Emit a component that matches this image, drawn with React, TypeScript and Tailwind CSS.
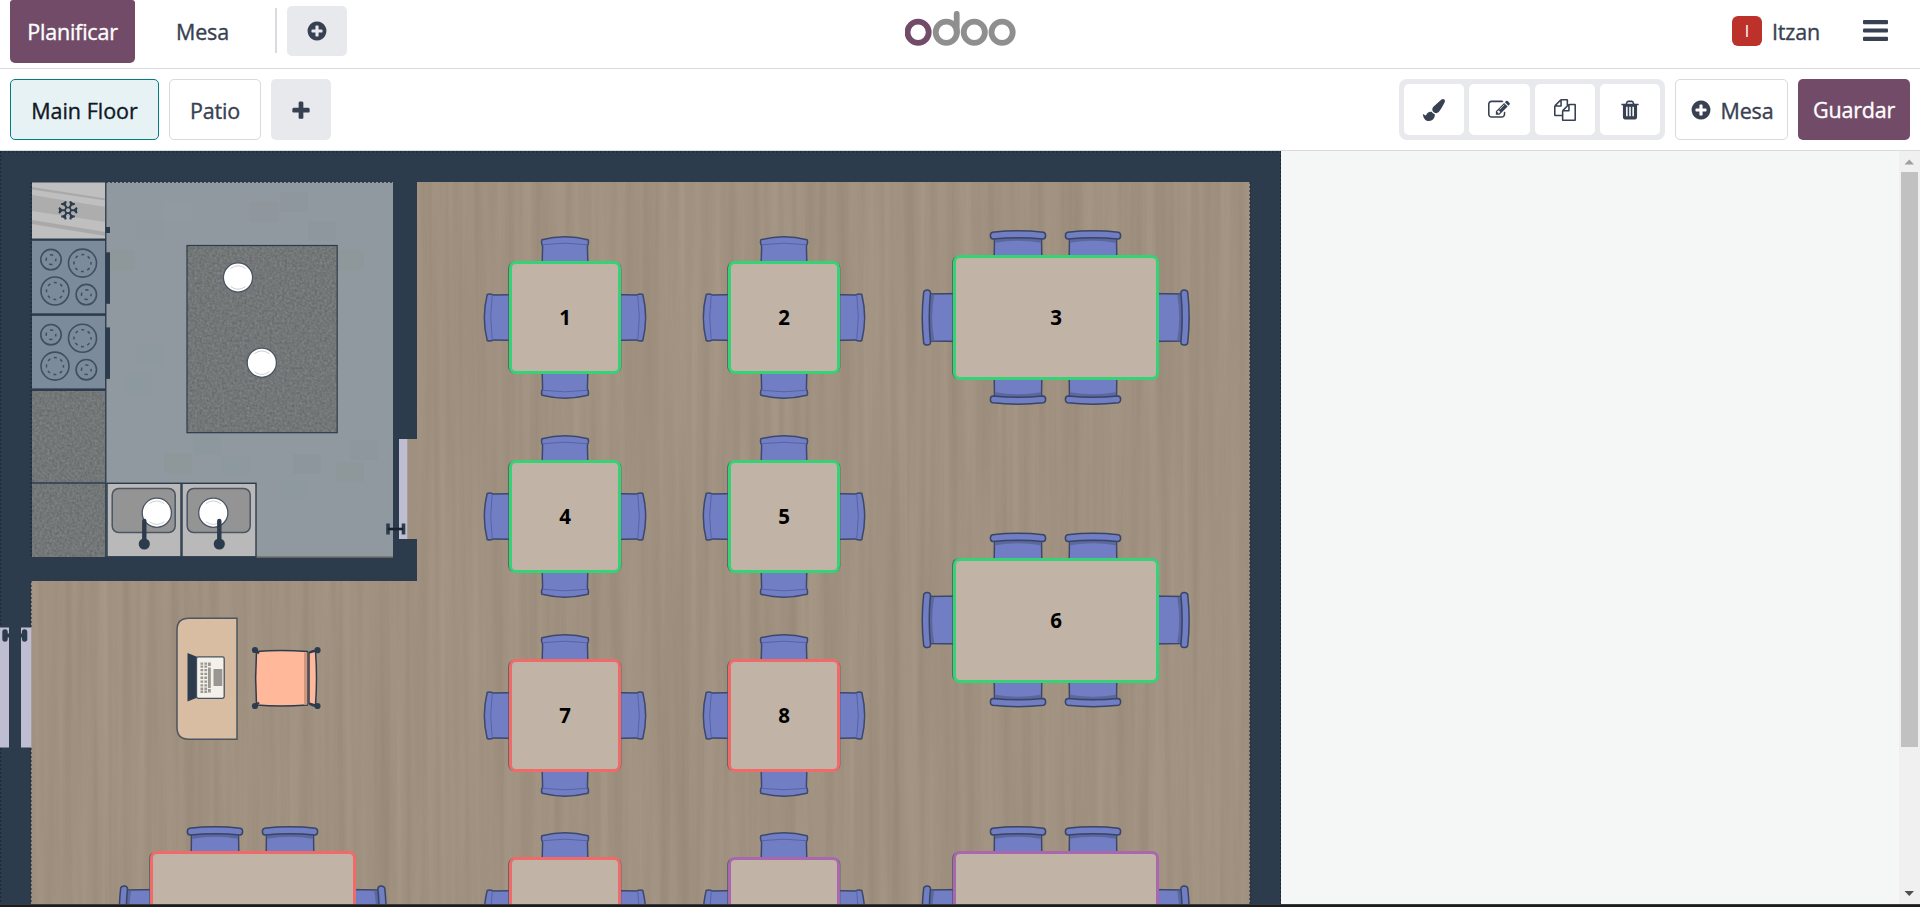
import React from "react";

const INK = "#374151";
const WALL = "#2d3c4d";

const ICONS = {
  brush:
    "M1615 0q70 0 122.5 46.5t52.5 116.5q0 63-45 151-332 629-465 752-97 91-218 91-126 0-216.5-92.5t-90.5-219.5q0-128 92-212l638-579q59-54 130-54zm-909 1034q39 76 106.5 130t150.5 76l1 71q4 213-129.5 347t-348.5 134q-123 0-218-46.5t-152.5-127.5-86.5-183-29-220q7 5 41 30t62 44.5 59 36.5 46 17q41 0 55-37 25-66 57.5-112.5t69.5-76 88-47.5 103-25.5 125-10.5z",
  edit:
    "M888 1184l116-116-152-152-116 116v56h96v96h56zm440-720q-16-16-33 1l-350 350q-17 17-1 33t33-1l350-350q17-17 1-33zm80 594v190q0 119-84.5 203.5t-203.5 84.5h-832q-119 0-203.5-84.5t-84.5-203.5v-832q0-119 84.5-203.5t203.5-84.5h832q63 0 117 25 15 7 18 23 3 17-9 29l-49 49q-14 14-32 8-23-6-45-6h-832q-66 0-113 47t-47 113v832q0 66 47 113t113 47h832q66 0 113-47t47-113v-126q0-13 9-22l64-64q15-15 35-7t20 29zm-96-738l288 288-672 672h-288v-288zm444 132l-92 92-288-288 92-92q28-28 68-28t68 28l152 152q28 28 28 68t-28 68z",
  copy:
    "M1696 384q40 0 68 28t28 68v1216q0 40-28 68t-68 28h-960q-40 0-68-28t-28-68v-288h-544q-40 0-68-28t-28-68v-672q0-40 20-88t48-76l408-408q28-28 76-48t88-20h416q40 0 68 28t28 68v328q68-40 128-40h416zm-544 213l-299 299h299v-299zm-640-384l-299 299h299v-299zm196 647l316-316v-416h-384v416q0 40-28 68t-68 28h-416v640h512v-256q0-40 20-88t48-76zm956 804v-1152h-384v416q0 40-28 68t-68 28h-416v640h896z",
  trash:
    "M704 1376v-704q0-14-9-23t-23-9h-64q-14 0-23 9t-9 23v704q0 14 9 23t23 9h64q14 0 23-9t9-23zm256 0v-704q0-14-9-23t-23-9h-64q-14 0-23 9t-9 23v704q0 14 9 23t23 9h64q14 0 23-9t9-23zm256 0v-704q0-14-9-23t-23-9h-64q-14 0-23 9t-9 23v704q0 14 9 23t23 9h64q14 0 23-9t9-23zm-544-992h448l-48-117q-7-9-17-11h-317q-10 2-17 11zm928 32v64q0 14-9 23t-23 9h-96v948q0 83-47 143.5t-113 60.5h-832q-66 0-113-58.5t-47-141.5v-952h-96q-14 0-23-9t-9-23v-64q0-14 9-23t23-9h309l70-167q15-37 54-63t79-26h320q40 0 79 26t54 63l70 167h309q14 0 23 9t9 23z",
  plusCircle:
    "M1344 960v-128q0-26-19-45t-45-19h-256v-256q0-26-19-45t-45-19h-128q-26 0-45 19t-19 45v256h-256q-26 0-45 19t-19 45v128q0 26 19 45t45 19h256v256q0 26 19 45t45 19h128q26 0 45-19t19-45v-256h256q26 0 45-19t19-45zm320-64q0 209-103 385.5t-279.5 279.5-385.5 103-385.5-103-279.5-279.5-103-385.5 103-385.5 279.5-279.5 385.5-103 385.5 103 279.5 279.5 103 385.5z",
  plus:
    "M1600 736v192q0 40-28 68t-68 28h-416v416q0 40-28 68t-68 28h-192q-40 0-68-28t-28-68v-416h-416q-40 0-68-28t-28-68v-192q0-40 28-68t68-28h416v-416q0-40 28-68t68-28h192q40 0 68 28t28 68v416h416q40 0 68 28t28 68z",
};

function Icon({ name, size = 22 }: { name: keyof typeof ICONS; size?: number }) {
  return (
    <svg width={size} height={size} viewBox="0 0 1792 1792" fill={INK} className="shrink-0">
      <path d={ICONS[name]} />
    </svg>
  );
}

function Logo() {
  return (
    <svg width="111" height="36" viewBox="904.9 11 111 36" fill="none" strokeWidth="5.8">
      <circle cx="918" cy="32.3" r="10.6" stroke="#714b67" />
      <g stroke="#8f8f8f">
        <circle cx="946.2" cy="32.3" r="10.6" />
        <path d="M956.6 32.3V13.8" strokeLinecap="round" />
        <circle cx="974.2" cy="32.3" r="10.6" />
        <circle cx="1002" cy="32.3" r="10.6" />
      </g>
    </svg>
  );
}

function TopBar() {
  return (
    <header className="flex h-[69px] shrink-0 items-start justify-between border-b border-[#d8dadd] bg-white">
      <div className="flex w-[600px] items-start pl-[10px]">
        <button className="flex h-[63px] w-[125px] items-center justify-center rounded-b-[5px] rounded-t-[3px] bg-[#714b67] pt-[2px] tracking-[-0.2px] text-white">
          Planificar
        </button>
        <button className="flex h-[63px] w-[135px] items-center justify-center pt-[2px]">Mesa</button>
        <div className="ml-[5px] mt-2 h-[45px] w-[2px] bg-[#d8dadd]" />
        <button className="ml-[10px] mt-[6px] flex h-[50px] w-[60px] items-center justify-center rounded-[5px] bg-[#e7e9ed]">
          <Icon name="plusCircle" />
        </button>
      </div>
      <div className="pt-[11px]">
        <Logo />
      </div>
      <div className="flex w-[600px] items-start justify-end pr-[32px]">
        <div className="mt-4 flex h-[30px] w-[30px] items-center justify-center rounded-[6px] bg-[#bc322b] text-[16px] font-normal text-white [-webkit-text-stroke:0px]">
          I
        </div>
        <span className="ml-[10px] mt-[17px] flex h-[30px] w-[50px] items-center">Itzan</span>
        <svg className="ml-[41px] mt-5" width="25" height="21" viewBox="0 0 25 21" fill={INK}>
          <rect width="25" height="4.2" rx="1" />
          <rect y="8.4" width="25" height="4.2" rx="1" />
          <rect y="16.8" width="25" height="4.2" rx="1" />
        </svg>
      </div>
    </header>
  );
}

function ToolBar() {
  return (
    <div className="flex h-[82px] shrink-0 items-center justify-between border-b border-[#d8dadd] bg-white px-[10px]">
      <div className="flex h-[61px] gap-[10px]">
        <button className="w-[149px] rounded-[5px] border border-[#017e84] bg-[#e6f2f3] pt-[4px] tracking-[0px] text-[#111827]">
          Main Floor
        </button>
        <button className="w-[92px] rounded-[5px] border border-[#d8dadd] pt-[4px]">Patio</button>
        <button className="flex w-[60px] items-center justify-center rounded-[5px] bg-[#e7e9ed] pt-[2px]">
          <Icon name="plus" />
        </button>
      </div>
      <div className="flex h-[61px] gap-[10px]">
        <div className="flex w-[266px] gap-[5px] rounded-[8px] bg-[#e7e9ed] p-[5px]">
          {(["brush", "edit", "copy", "trash"] as const).map((n) => (
            <button key={n} className="flex flex-1 items-center justify-center rounded-[5px] bg-white">
              <Icon name={n} />
            </button>
          ))}
        </div>
        <button className="flex w-[113px] items-center justify-center gap-[9px] rounded-[5px] border border-[#d8dadd]">
          <Icon name="plusCircle" />
          <span className="pt-[3px]">Mesa</span>
        </button>
        <button className="w-[112px] rounded-[5px] bg-[#714b67] pt-[2px] text-white">Guardar</button>
      </div>
    </div>
  );
}

type Table = {
  id: number;
  label?: string;
  kind: "square" | "wide";
  x: number;
  y: number;
  color: string;
};

const GREEN = "#36d276";
const RED = "#f06a6a";
const PURPLE = "#a968ae";

const TABLES: Table[] = [
  { id: 1, label: "1", kind: "square", x: 509, y: 261, color: GREEN },
  { id: 2, label: "2", kind: "square", x: 728, y: 261, color: GREEN },
  { id: 3, label: "3", kind: "wide", x: 953, y: 255, color: GREEN },
  { id: 4, label: "4", kind: "square", x: 509, y: 460, color: GREEN },
  { id: 5, label: "5", kind: "square", x: 728, y: 460, color: GREEN },
  { id: 6, label: "6", kind: "wide", x: 953, y: 557.5, color: GREEN },
  { id: 7, label: "7", kind: "square", x: 509, y: 659, color: RED },
  { id: 8, label: "8", kind: "square", x: 728, y: 659, color: RED },
  { id: 9, kind: "wide", x: 150, y: 851, color: RED },
  { id: 10, kind: "square", x: 509, y: 857, color: RED },
  { id: 11, kind: "square", x: 728, y: 857, color: PURPLE },
  { id: 12, kind: "wide", x: 953, y: 851, color: PURPLE },
];

function SoftChair({ cx, cy, angle }: { cx: number; cy: number; angle: number }) {
  return (
    <g transform={`translate(${cx} ${cy}) rotate(${angle}) translate(0 -81.3)`}>
      <path
        d="M-23 3.5Q0-2.2 23 3.5Q24.3 6 22.4 10L23 34H-23L-22.4 10Q-24.3 6-23 3.5Z"
        fill="#727ec3"
        stroke="#3c486c"
        strokeWidth="1.5"
      />
      <path d="M-22 8.5Q0 5.5 22 8.5" fill="none" stroke="#5260a3" strokeWidth="0.9" />
    </g>
  );
}

function RailChair({ cx, cy, angle, reach }: { cx: number; cy: number; angle: number; reach: number }) {
  return (
    <g transform={`translate(${cx} ${cy}) rotate(${angle}) translate(0 ${-reach})`}>
      <path d="M-23.5 6H23.5L24 42H-24Z" fill="#727ec3" stroke="#3c4866" strokeWidth="1.5" />
      <path d="M-22.8 6H22.8V12.5Q0 8.5-22.8 12.5Z" fill="#5b679f" />
      <path
        d="M-25.5 2Q0-.9 25.5 2C28.4 3 28.4 8.5 25 8.8Q0 6.3-25 8.8C-28.4 8.5-28.4 3-25.5 2Z"
        fill="#727ec3"
        stroke="#384564"
        strokeWidth="1.5"
      />
    </g>
  );
}

function Seats({ table }: { table: Table }) {
  if (table.kind === "square") {
    const cx = table.x + 56;
    const cy = table.y + 56.5;
    return (
      <g>
        {[0, 90, 180, 270].map((a) => (
          <SoftChair key={a} cx={cx} cy={cy} angle={a} />
        ))}
        <rect x={table.x - 0.7} y={table.y + 1} width="113" height="111" rx="6" fill="#48545e" />
      </g>
    );
  }
  const cx = table.x + 102.7;
  const cy = table.y + 62.5;
  return (
    <g>
      <RailChair cx={cx - 37.7} cy={cy} angle={0} reach={87.3} />
      <RailChair cx={cx + 37.3} cy={cy} angle={0} reach={87.3} />
      <RailChair cx={cx - 37.7} cy={cy} angle={180} reach={87.3} />
      <RailChair cx={cx + 37.3} cy={cy} angle={180} reach={87.3} />
      <RailChair cx={cx} cy={cy} angle={270} reach={134} />
      <RailChair cx={cx} cy={cy} angle={90} reach={134} />
      <rect x={table.x - 0.7} y={table.y + 1} width="206" height="123" rx="6" fill="#48545e" />
    </g>
  );
}

function Burner({ x, y, r }: { x: number; y: number; r: number }) {
  const inner = r > 12 ? 8.5 : 4.8;
  const dash = (2 * Math.PI * inner) / (r > 12 ? 8 : 4);
  return (
    <g fill="none" stroke="#3f4f62">
      <circle cx={x} cy={y} r={r} strokeWidth="1.6" />
      <circle
        cx={x}
        cy={y}
        r={inner}
        strokeWidth="1.5"
        strokeDasharray={`${dash * 0.45} ${dash * 0.55}`}
        strokeDashoffset={dash * 0.22}
      />
    </g>
  );
}

function Stove({ y }: { y: number }) {
  return (
    <g transform={`translate(0 ${y})`}>
      <rect x="32" y="0" width="73.5" height="72.5" fill="#7b8b9b" />
      <Burner x={51} y={18.8} r={10.2} />
      <Burner x={82.5} y={22.3} r={14} />
      <Burner x={55} y={50.2} r={14} />
      <Burner x={86.3} y={53.8} r={10.2} />
      <rect x="105.5" y="11.5" width="4.5" height="51.5" fill={WALL} />
    </g>
  );
}

function Sink({ x, plate }: { x: number; plate: number }) {
  return (
    <g>
      <rect x={x} y="483.3" width="74" height="73.5" fill="#b9b9b9" stroke={WALL} strokeWidth="1.4" />
      <rect x={x + 5.2} y="488.5" width="63" height="44" rx="6.5" fill="#949494" stroke="#4b5663" strokeWidth="1.5" />
      <Plate x={plate} y={512.7} />
      <path d={`M${x + 37.3} 521V544`} stroke={WALL} strokeWidth="4.4" strokeLinecap="round" />
      <circle cx={x + 37.3} cy="544" r="5.6" fill={WALL} />
    </g>
  );
}

function Plate({ x, y }: { x: number; y: number }) {
  return (
    <g>
      <circle cx={x} cy={y} r="14.6" fill="#fff" stroke="#4a5464" strokeWidth="1.3" />
      <path
        d={`M${x - 7.5} ${y - 9}Q${x} ${y - 14.5} ${x + 7.5} ${y - 9}M${x - 7.5} ${y + 9}Q${x} ${y + 14.5} ${x + 7.5} ${y + 9}`}
        fill="none"
        stroke="#cfcfcf"
        strokeWidth="1"
      />
    </g>
  );
}

function Snowflake() {
  return (
    <g transform="translate(68 210.3)" stroke={WALL} strokeWidth="2.1" fill="none">
      {[30, 90, 150, 210, 270, 330].map((a) => (
        <path key={a} transform={`rotate(${a})`} d="M0-2V-9M-2.6-9L0-6.4L2.6-9" />
      ))}
      <circle r="2.8" fill="#b5b5b5" strokeWidth="1.6" />
    </g>
  );
}

const TILES: [number, number, string][] = [
  [250, 202, "#8f9397"], [280, 192, "#8b959e"], [136, 221, "#8d979f"], [164, 202, "#939da2"],
  [106, 250, "#8c9893"], [336, 250, "#8c9592"], [308, 221, "#8b969f"],
  [136, 345, "#8b98a0"], [364, 202, "#929ba1"], [350, 440, "#8a949c"], [193, 435, "#8a949d"],
  [222, 455, "#8b98a0"], [164, 453, "#8b9591"], [336, 462, "#8b9490"], [293, 454, "#89939c"],
  [279, 480, "#8b97a0"], [124, 374, "#8b98a0"], [308, 502, "#919ba1"], [364, 345, "#919ca2"],
];

function FloorPlan() {
  return (
    <svg className="absolute left-0 top-0" width="1281" height="753" viewBox="0 151 1281 753">
      <defs>
        <filter id="wood" x="0" y="0" width="100%" height="100%" colorInterpolationFilters="sRGB">
          <feTurbulence type="fractalNoise" baseFrequency="0.1 0.002" numOctaves="4" seed="7" />
          <feColorMatrix values="0.075 0 0 0 0.588  0.075 0 0 0 0.529  0.075 0 0 0 0.463  0 0 0 0 1" />
        </filter>
        <filter id="stone" x="0" y="0" width="100%" height="100%" colorInterpolationFilters="sRGB">
          <feTurbulence type="fractalNoise" baseFrequency="0.4" numOctaves="3" seed="3" />
          <feColorMatrix values="0.16 0 0 0 0.37  0.16 0 0 0 0.385  0.16 0 0 0 0.385  0 0 0 0 1" />
        </filter>
      </defs>
      <rect y="151" width="1281" height="753" fill={WALL} />
      <rect x="31" y="182" width="1219" height="722" filter="url(#wood)" />

      <rect x="31" y="182" width="386" height="399" fill={WALL} />
      <rect x="106" y="182" width="287" height="374.5" fill="#8f999f" />
      {TILES.map(([x, y, c]) => (
        <rect key={`${x}-${y}`} x={x} y={y} width="28" height="20" fill={c} opacity="0.35" />
      ))}
      <path d="M256 557H393" stroke="#9b8b7a" />

      <rect x="407" y="439" width="10.5" height="100" fill="#a09080" />
      <rect x="399" y="439" width="8.3" height="100" fill="#bebdd2" />
      <path d="M388 523.5V534.5M403.5 523.5V534.5" stroke={WALL} strokeWidth="3.6" />
      <path d="M388 529H403" stroke="#17222e" strokeWidth="2.6" />

      <path d="M0 627.5H9V747.5H0ZM21 627.5H31.3V747.5H21Z" fill="#bebdd2" />
      <path d="M5 632V639M24.6 632V639" stroke={WALL} strokeWidth="5.4" strokeLinecap="round" />
      <path d="M5 635.5H25" stroke={WALL} strokeWidth="4" />

      <rect x="32" y="182.5" width="73.5" height="56" fill="#bfbfbf" />
      <path d="M32 195L105.5 207V222L32 211Z" fill="#adadad" />
      <path d="M32 187L105.5 198.5V200.5L32 189.5ZM32 220L105.5 232V236L32 224Z" fill="#a9a9a9" />
      <Snowflake />
      <rect x="105.5" y="227" width="4.5" height="6" fill={WALL} />
      <Stove y={240.8} />
      <Stove y={315.9} />
      <rect x="32" y="391" width="73.5" height="91.3" filter="url(#stone)" />
      <rect x="32" y="483.7" width="73.5" height="72.8" filter="url(#stone)" />
      <path d="M105.8 182V557M31 483H106" stroke={WALL} strokeWidth="1.3" />
      <Sink x={107} plate={156.8} />
      <Sink x={182} plate={213.3} />
      <rect x="187" y="245.5" width="150" height="187" filter="url(#stone)" />
      <rect x="187" y="245.5" width="150.2" height="187.2" fill="none" stroke={WALL} strokeWidth="1.2" />
      <Plate x={238} y={277.5} />
      <Plate x={261.8} y={362.7} />

      <path
        d="M237 618.3H189Q177 618.3 177 630V727.5Q177 739.3 189 739.3H237Z"
        fill="#d9bda3"
        stroke="#4c565f"
        strokeWidth="1.5"
      />
      <path d="M187.5 653L197.5 657V697.5L187.5 701.5Z" fill={WALL} />
      <rect x="196.5" y="656.8" width="27.7" height="41.5" rx="1.8" fill="#f4f1eb" stroke="#46525f" strokeWidth="1.3" />
      <g fill="#9a9792">
        {[662.5, 665.4, 668.9, 672.8, 676.6, 680.4, 684.2, 687.6, 690.6].map((y) => (
          <path key={y} d={`M200.5 ${y}h2.700v2.300h-2.700zM204.400 ${y}h2.700v2.300h-2.700z`} />
        ))}
        <path d="M208 667.5h2.8v20.5h-2.8zM208 662.5h2.8v3.500h-2.8zM208 689h2.8v3.500h-2.8zM213.500 669h8.800v17h-8.800z" />
      </g>

      <g stroke={WALL} strokeWidth="1.5">
        <path d="M256.5 651.5Q280 649.5 307.5 651.5V705Q280 707 256.5 705Q254.8 678 256.5 651.5Z" fill="#ffb899" />
        <path d="M309 653Q313 649.5 315.5 651Q317.5 678 315.5 705.5Q313 707 309 703.5Z" fill="#ffb899" />
      </g>
      <path d="M304 652.5H307.5V704.5H304Z" fill="#d2967c" />
      <path d="M308.2 653V704" stroke="#4f5258" strokeWidth="1.5" />
      <g fill={WALL}>
        <circle cx="255" cy="650" r="3.1" />
        <circle cx="317.5" cy="650.2" r="3.1" />
        <circle cx="255" cy="706" r="3.1" />
        <circle cx="317.5" cy="706" r="3.1" />
      </g>
      <path
        d="M255 650L259 653.5M317.5 650.2L309.5 652.5M255 706L259 702.5M317.5 706L309.5 703.5"
        stroke={WALL}
        strokeWidth="2.2"
      />

      <g stroke="#1b2733" strokeWidth="1" strokeDasharray="2 2" fill="none">
        <path d="M0 152H1281M.8 151V627M.8 748V904M31 182V557M31 581V627M31 748V904" />
        <path d="M106 182.2H393M1250 182V904M1280.5 151V904" />
      </g>

      {TABLES.map((t) => (
        <Seats key={t.id} table={t} />
      ))}
    </svg>
  );
}

function TableCard({ table }: { table: Table }) {
  const size = table.kind === "square" ? "h-[113px] w-[112px]" : "h-[125px] w-[206px]";
  return (
    <div
      className={`absolute flex items-center justify-center rounded-[7px] border-[3px] bg-[#c1b3a5] text-[20.5px] font-bold text-black [-webkit-text-stroke:0px] ${size}`}
      style={{ left: table.x, top: table.y - 151, borderColor: table.color }}
    >
      {table.label}
    </div>
  );
}

function ScrollBar() {
  return (
    <div className="flex w-[21px] flex-col items-center bg-[#f0f0f0]">
      <svg width="21" height="21" viewBox="0 0 21 21" fill="#a0a0a0">
        <path d="M5.5 13.5L10.3 8.5L15 13.5Z" />
      </svg>
      <div className="h-[575px] w-[17px] bg-[#c1c1c1]" />
      <div className="flex-1" />
      <svg width="21" height="21" viewBox="0 0 21 21" fill="#505050">
        <path d="M5.5 8L10.3 13L15 8Z" />
      </svg>
    </div>
  );
}

export default function App() {
  return (
    <div className="flex h-[907px] w-[1920px] flex-col overflow-hidden bg-[#1d1d1f] font-['Open_Sans','Noto_Sans',sans-serif] text-[21.5px] font-medium tracking-[-0.2px] text-[#374151] [-webkit-text-stroke:0.35px]">
      <TopBar />
      <ToolBar />
      <main className="flex h-[753px] shrink-0 overflow-hidden bg-[#f4f7f6]">
        <div className="relative h-full w-[1281px] shrink-0 overflow-hidden">
          <FloorPlan />
          {TABLES.map((t) => (
            <TableCard key={t.id} table={t} />
          ))}
        </div>
        <div className="flex-1" />
        <ScrollBar />
      </main>
      <div className="h-px shrink-0 bg-[#3a3a3c]" />
    </div>
  );
}
